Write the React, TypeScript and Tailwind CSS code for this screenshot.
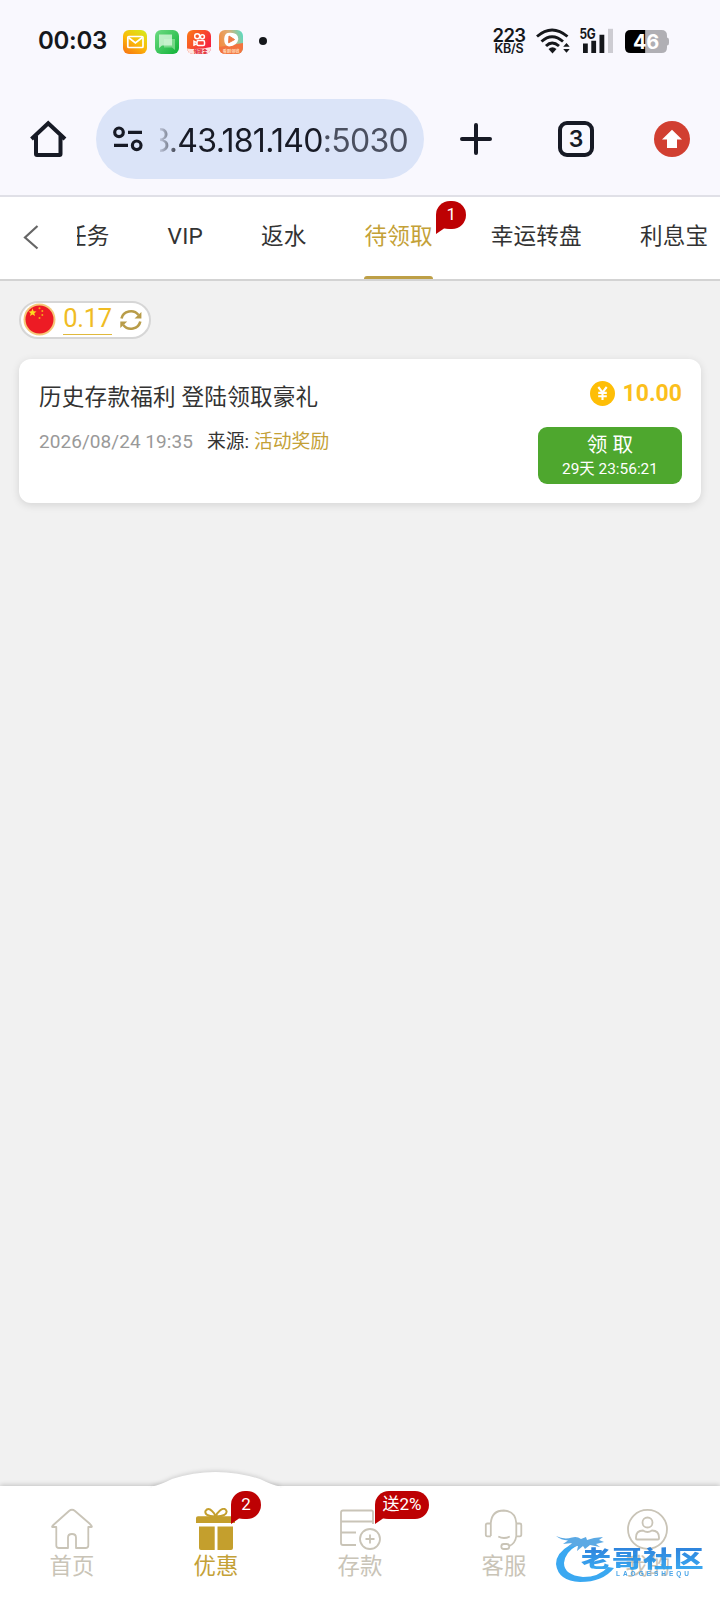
import type { ReactNode } from 'react';

const tabs = ['任务', 'VIP', '返水', '待领取', '幸运转盘', '利息宝'];

function Bubble({ children, className }: { children: ReactNode; className: string }) {
  return (
    <span className={`absolute flex h-[28px] items-center justify-center rounded-[14px] bg-[#bd0103] text-white ${className}`}>
      <svg className="absolute top-[14px] left-0" width="14" height="20" viewBox="0 0 14 20">
        <path d="M0 0V19L8 13.5H14V0Z" fill="#bd0103" />
      </svg>
      <span className="relative -mt-[2px] leading-none">{children}</span>
    </span>
  );
}

function StatusBar() {
  return (
    <div className="flex h-[82px] items-center pl-[38px] text-[#15171b]">
      <span className="w-[85px] font-['Inter'] text-[24px] leading-none font-semibold tracking-[-0.3px]">00:03</span>
      <div className="flex gap-2 pt-[2px]">
        <svg width="24" height="24" viewBox="0 0 24 24">
          <defs>
            <linearGradient id="mail" x1="0.8" y1="0" x2="0.2" y2="1">
              <stop offset="0" stopColor="#d9e619" />
              <stop offset="0.5" stopColor="#fbbc09" />
              <stop offset="1" stopColor="#f87a12" />
            </linearGradient>
          </defs>
          <rect width="24" height="24" rx="6" fill="url(#mail)" />
          <rect x="4.8" y="6.5" width="15.2" height="11" rx="1" fill="none" stroke="#fff" strokeWidth="1.7" />
          <path d="M5.5 7.5L12.4 13L19.3 7.5" fill="none" stroke="#fff" strokeWidth="1.7" />
        </svg>
        <svg width="24" height="24" viewBox="0 0 24 24">
          <defs>
            <linearGradient id="chat" x1="0" y1="0" x2="1" y2="1">
              <stop offset="0" stopColor="#6edb82" />
              <stop offset="1" stopColor="#10b238" />
            </linearGradient>
          </defs>
          <rect width="24" height="24" rx="6" fill="url(#chat)" />
          <path d="M9 9H20V20L17 17.5H9Z" fill="#a5e8ad" opacity="0.6" />
          <path d="M4 4.5H17V15.5H7L4 18Z" fill="#d8f8dc" opacity="0.8" />
        </svg>
        <svg width="24" height="24" viewBox="0 0 24 24">
          <defs>
            <linearGradient id="cam" x1="0" y1="0" x2="1" y2="0.7">
              <stop offset="0" stopColor="#fb7d16" />
              <stop offset="1" stopColor="#f51d43" />
            </linearGradient>
            <clipPath id="round"><rect width="24" height="24" rx="6" /></clipPath>
          </defs>
          <g clipPath="url(#round)">
            <rect width="24" height="24" fill="url(#cam)" />
            <g fill="none" stroke="#fff" strokeWidth="1.5">
              <circle cx="10.2" cy="6.2" r="2.5" />
              <circle cx="15.4" cy="6.8" r="2" />
              <rect x="10" y="10.6" width="7.5" height="5" rx="1.3" />
              <path d="M9.8 12.6L7 11.3V15L9.8 13.8" />
            </g>
            <path d="M0 18.5Q12 20 24 17V24H0Z" fill="#ffe5df" />
            <g transform="translate(6.5 23) scale(0.42)">
              <text fontSize="11" fontWeight="900" fill="#df2633" fontFamily="Noto Sans CJK SC, sans-serif">领现金</text>
            </g>
          </g>
        </svg>
        <svg width="24" height="24" viewBox="0 0 24 24">
          <defs>
            <linearGradient id="play" x1="0" y1="0.6" x2="1" y2="0.3">
              <stop offset="0" stopColor="#f58a3e" />
              <stop offset="0.5" stopColor="#e0ae74" />
              <stop offset="1" stopColor="#62d8bd" />
            </linearGradient>
          </defs>
          <g clipPath="url(#round)">
            <rect width="24" height="24" fill="url(#play)" />
            <path d="M0 17L24 13V24H0Z" fill="#f3743f" />
            <path d="M8.5 3Q19 1.5 19.3 9Q18.5 15.5 10 16.5Q5 15.5 5.2 9Q5.5 4 8.5 3Z" fill="#fff" />
            <path d="M10 6L15.6 9.6L9.6 12.8Z" fill="#ee7a45" stroke="#ee7a45" strokeWidth="1" strokeLinejoin="round" />
            <g transform="translate(3.8 22.6) scale(0.38)">
              <text fontSize="11" fontWeight="700" fill="#ffd9b5" fontFamily="Noto Sans CJK SC, sans-serif">看剧领钱</text>
            </g>
          </g>
        </svg>
      </div>
      <span className="ml-4 h-2 w-2 rounded-full bg-[#15171b]" />
      <div className="ml-[225px] flex h-[28px] w-[34px] flex-col items-center font-['Inter'] leading-none font-semibold">
        <span className="text-[18.5px] leading-[16px] tracking-[-0.6px]">223</span>
        <span className="text-[12.5px] leading-[12px] tracking-[-0.2px]">KB/S</span>
      </div>
      <svg className="ml-[10px]" width="34" height="26" viewBox="0 0 34 26">
        <g fill="none" stroke="#15171b" strokeWidth="2.9">
          <path d="M1 8.5Q16 -4.5 31.5 8.5" />
          <path d="M5.5 13.5Q16 4 27 13.5" />
          <path d="M10 18Q16 12 23 18" />
        </g>
        <path d="M12.5 21Q16.5 17.5 20.5 21L16.5 25.5Z" fill="#15171b" />
        <path d="M27.2 18.8L30.5 15L33.7 18.8ZM27.2 21L30.5 24.7L33.7 21Z" fill="#15171b" />
      </svg>
      <svg className="ml-[9px]" width="36" height="28" viewBox="0 -1 36 28">
        <g transform="translate(0.5 10.5) scale(0.82 1)">
          <text fontSize="14.5" fontWeight="700" fill="#15171b" fontFamily="Inter, sans-serif" letterSpacing="-0.4">5G</text>
        </g>
        <path d="M4 15.5H8.8V25H4ZM12.3 12.8H17.1V25H12.3ZM20.5 6.8H25.3V25H20.5Z" fill="#15171b" />
        <path d="M29 0.8H34V25H29Z" fill="#cdccd2" />
      </svg>
      <svg className="ml-[9px]" width="46" height="25" viewBox="0 0 46 25">
        <path d="M6.5 1H21.5V24H6.5Q1 24 1 18.5V6.5Q1 1 6.5 1Z" fill="#000" />
        <path d="M21.5 1H37.5Q43 1 43 6.5V8.5Q45 8.5 45 11V14Q45 16.5 43 16.5V18.5Q43 24 37.5 24H21.5Z" fill="#b0afb4" />
        <text x="9" y="19.5" fontSize="20" fontWeight="700" letterSpacing="-0.4" fill="#fff" fontFamily="Inter, sans-serif">46</text>
      </svg>
    </div>
  );
}

function BrowserBar() {
  return (
    <div className="flex h-[115px] items-start border-b-2 border-[#e0e0e7] pt-[17px] pl-[30px]">
      <svg className="mt-[21px]" width="37" height="38" viewBox="0 0 37 38">
        <path d="M1.5 19L18.2 3.2L35 19M6 16V34Q6 35 7 35H29.5Q30.5 35 30.5 34V16" fill="none" stroke="#171a25" strokeWidth="4" />
      </svg>
      <div className="ml-[29px] flex h-[80px] w-[328px] items-center rounded-full bg-[#dbe4f8] pl-[16px]">
        <svg width="32" height="26" viewBox="0 0 32 26">
          <g fill="none" stroke="#171a25" strokeWidth="3.2">
            <circle cx="7" cy="6.3" r="4.3" />
            <path d="M16 6.3H30M2 19.3H16" />
            <circle cx="24.7" cy="19.3" r="4.3" />
          </g>
        </svg>
        <div className="ml-[16px] flex h-10 w-[248px] translate-y-[2px] items-center justify-end overflow-hidden [mask-image:linear-gradient(to_right,rgba(0,0,0,0.15),black_22px)]">
          <span className="shrink-0 font-['Inter'] text-[32px] leading-10 font-[370] tracking-[-0.7px] text-[#171a25]">
            3.43.181.140<span className="text-[#4b5060]">:5030</span>
          </span>
        </div>
      </div>
      <svg className="mt-[23px] ml-[35px]" width="34" height="34" viewBox="0 0 34 34">
        <path d="M17 3V31M3 17H31" stroke="#171a25" strokeWidth="4" strokeLinecap="round" />
      </svg>
      <span className="mt-[22px] ml-[65px] flex h-9 w-9 items-center justify-center rounded-[9px] border-4 border-[#171a25] font-['Inter'] text-[23px] leading-none font-semibold text-[#171a25]">3</span>
      <svg className="mt-[22px] ml-[60px]" width="36" height="36" viewBox="0 0 36 36">
        <circle cx="18" cy="18" r="18" fill="#d13f31" />
        <path d="M18 8.7L28 18.5H23V27H13V18.5H8Z" fill="#fff" />
      </svg>
    </div>
  );
}

function TabBar() {
  return (
    <div className="flex h-[84px] border-b-2 border-[#d3d3d3] bg-white">
      <svg className="mt-[27px] ml-[22px] shrink-0" width="18" height="26" viewBox="0 0 18 26">
        <path d="M15.5 2L3 13.5L15.5 24.5" fill="none" stroke="#666" strokeWidth="2.2" />
      </svg>
      <div className="ml-[37px] flex w-[643px] overflow-hidden">
        <div className="-ml-[13px] flex shrink-0 gap-[58px]">
          {tabs.map((t) => {
            const active = t === '待领取';
            return (
              <div key={t} className={`relative h-[82px] shrink-0 pt-[26px] text-[22.6px] leading-[28px] tracking-[0.18px] whitespace-nowrap ${active ? 'text-[#c4a137]' : 'text-[#333]'}`}>
                {t}
                {active && <span className="absolute bottom-0 left-0 h-[3px] w-full rounded-t-sm bg-[#bd9f46]" />}
                {active && <Bubble className="top-[4px] left-[72px] w-[30px] text-[17px]">1</Bubble>}
              </div>
            );
          })}
        </div>
      </div>
    </div>
  );
}

function Balance() {
  return (
    <div className="flex h-[38px] w-[132px] items-center rounded-full border-2 border-[#d6d6d6] bg-white pl-[2px]">
      <svg className="-mt-[2px]" width="33" height="33" viewBox="0 0 33 33">
        <circle cx="16.5" cy="16.5" r="16" fill="#f6c878" />
        <circle cx="16.5" cy="16.5" r="14" fill="#ed1b24" />
        <path d="M9.5 5.5L10.6 8.2L13.5 8.4L11.3 10.2L12 13L9.5 11.5L7 13L7.7 10.2L5.5 8.4L8.4 8.2Z" fill="#fbdc20" />
        <g fill="#f5a81c">
          <circle cx="16.5" cy="5.2" r="1" /><circle cx="19.3" cy="8" r="1" /><circle cx="19.3" cy="12" r="1" /><circle cx="16.5" cy="15" r="1" />
        </g>
      </svg>
      <span className="-mt-px ml-[7px] h-[31px] w-[49px] border-b border-[#e0b93c] text-center font-['Roboto'] text-[25.5px] leading-[29px] tracking-[-0.3px] text-[#f0bc23]">0.17</span>
      <svg className="-mt-px ml-[7px]" width="24" height="24" viewBox="0 0 24 24">
        <g fill="none" stroke="#b89c48" strokeWidth="2.6">
          <path d="M2.5 10.5A9.5 9 0 0 1 19.5 7" />
          <path d="M21.3 13.5A9.5 9 0 0 1 4.3 17" />
        </g>
        <path d="M22.4 4V10.5H15.5ZM1.3 20V13.5H8.2Z" fill="#b89c48" />
      </svg>
    </div>
  );
}

function RewardCard() {
  return (
    <div className="mt-[20px] flex h-[144px] justify-between rounded-[12px] bg-white pr-[19px] pl-[20px] shadow-[0_2px_8px_rgba(0,0,0,0.12)]">
      <div className="pt-[23px]">
        <h1 className="text-[22.6px] leading-8 tracking-[0.2px] text-[#333]">历史存款福利 登陆领取豪礼</h1>
        <p className="mt-[15px] flex text-[18.8px] leading-[26px] text-[#333]">
          <span className="mr-[14px] font-['Roboto'] text-[19px] tracking-[0.05px] text-[#999]">2026/08/24 19:35</span>
          来源:<span className="ml-[5px] text-[#c4a137]">活动奖励</span>
        </p>
      </div>
      <div className="flex w-[144px] flex-col items-end pt-[21px]">
        <div className="flex h-[26px] items-center font-['Roboto'] text-[23px] leading-none font-bold text-[#fbbf1c]">
          <svg className="mr-[8px]" width="25" height="25" viewBox="0 0 25 25">
            <circle cx="12.5" cy="12.5" r="12.5" fill="#febe06" />
            <path d="M8.3 6L12.5 11.3L16.7 6M12.5 11V19M8.2 11.9H16.8M8.2 15.2H16.8" fill="none" stroke="#fff" strokeWidth="2.1" />
          </svg>
          10.00
        </div>
        <button className="mt-[21px] flex h-[57px] w-[144px] flex-col items-center rounded-[9px] bg-[#4ea72e] pt-[5px] text-white">
          <span className="text-[20.6px] leading-[26px]">领 取</span>
          <span className="font-['Roboto','Noto_Sans_CJK_SC',sans-serif] text-[15.4px] leading-[22px]">29天 23:56:21</span>
        </button>
      </div>
    </div>
  );
}

const stroke = { fill: 'none', stroke: '#c9c4b7', strokeWidth: 1.8 };

function NavItem({ icon, label, active = false, badge }: { icon: ReactNode; label: string; active?: boolean; badge?: ReactNode }) {
  return (
    <div className={`relative flex w-[144px] flex-col items-center pt-[22px] text-[22.4px] leading-[28px] ${active ? 'text-[#c4a137]' : 'text-[#c9c4b7]'}`}>
      <svg width="44" height="44" viewBox="0 0 44 44">{icon}</svg>
      <span>{label}</span>
      {badge}
    </div>
  );
}

function BottomNav() {
  return (
    <nav className="relative h-[118px] bg-white shadow-[0_-1px_5px_rgba(0,0,0,0.2)]">
      <svg className="absolute -top-[20px] left-[140px]" width="154" height="22" viewBox="0 0 154 22">
        <path d="M12 20.5Q20 19 32 13Q75 -1 120 13Q132 19 140 20.5V22H12Z" fill="#fff" className="[filter:drop-shadow(0_-1px_2px_rgba(0,0,0,0.15))]" />
        <path d="M14 20.5H138V22H14Z" fill="#fff" />
      </svg>
      <div className="relative flex">
        <NavItem label="首页" icon={
          <path {...stroke} strokeLinejoin="round" d="M5 15.5Q1 19 2.5 19H6.3V37.5Q6.3 40 9 40H18V29.5Q18 26 22 26Q26 26 26 29.5V40H35.5Q38.3 40 38.3 37.5V19H41.3Q43 19 39.5 15.5L25 3Q22 .6 19 3Z" />
        } />
        <NavItem label="优惠" active badge={<Bubble className="top-[5px] left-[87px] w-[30px] text-[17px]">2</Bubble>} icon={
          <g>
            <path d="M4 8.3H39Q41 8.3 41 10V15H2V10Q2 8.3 4 8.3ZM5 18.5H20.7V42H7Q5 42 5 40ZM23.5 18.5H39V40Q39 42 37 42H23.5Z" fill="#c49f2d" />
            <path d="M21 8.5Q10 8 11.5 3Q14 -1 18 3Q20.5 5 21.5 8.5Q23 5 26 2.5Q31 -1 32.5 3Q33.5 8 22 8.5" fill="none" stroke="#c49f2d" strokeWidth="2" />
          </g>
        } />
        <NavItem label="存款" badge={<Bubble className="top-[5px] left-[87px] w-[54px] text-[17px]">送2%</Bubble>} icon={
          <g {...stroke}>
            <path d="M35 16V4Q35 2.5 33.5 2.5H5Q3 2.5 3 4.5V35Q3 37 5 37H18M3 13.5H35M3 24.5H18" />
            <circle cx="32" cy="31" r="10" /><path d="M32 26.5V35.5M27.5 31H36.5" />
          </g>
        } />
        <NavItem label="客服" icon={
          <g {...stroke} transform="translate(-0.7 0)">
            <path d="M9.5 28V15Q10.5 2.5 22.5 2.5Q34 3 35 15V28M9.5 15.5H6Q4.5 15.5 4.5 17V26.5Q4.5 28.3 6 28.3H9.5M35 15.5H38.5Q40 15.5 40 17V26.5Q40 28.3 38.5 28.3H35M35 28Q34 35.5 28 38M17 28.5Q22.5 31.5 28.5 28.5" />
            <rect x="20" y="36" width="8" height="5" rx="2.5" />
          </g>
        } />
        <NavItem label="我的" icon={
          <g {...stroke}>
            <circle cx="21.5" cy="21.3" r="19.5" /><circle cx="21.5" cy="14.5" r="5" />
            <path d="M10 29.5Q10 22.5 17 22.5Q21.5 25.5 26 22.5Q33 22.5 33 29.5V30.5Q33 31.5 32 31.5H11Q10 31.5 10 30.5Z" />
          </g>
        } />
      </div>
      <svg className="absolute top-[46px] left-[550px]" width="160" height="56" viewBox="0 0 160 56" opacity="0.9">
        <defs>
          <linearGradient id="blue" x1="0" y1="0" x2="0" y2="1">
            <stop offset="0" stopColor="#1469d2" />
            <stop offset="1" stopColor="#28a8f4" />
          </linearGradient>
        </defs>
        <path d="M20 13Q6 21 6 32Q8 49 30 50Q53 50 64 36L58 35Q49 45 33 45Q14 43 14 31Q15 20 28 13Z" fill="#259ff0" />
        <path d="M6 4Q14 8 22 5.5Q27 4 31 7L36 5L37 8L44 6L53 5L49 8L54 10L46 12L50 15L40 13L35 17L33 14L27 19L28 14L18 15L22 11L13 12L18 8.5Q11 8 6 4Z" fill="#4aa0e2" />
        <g fill="url(#blue)" fontFamily="Noto Sans CJK SC, sans-serif" fontWeight="900">
          <text transform="translate(31 35) scale(1.34 1)" fontSize="22.3" letterSpacing="0.8">老哥社区</text>
        </g>
        <text x="66" y="43.5" fontSize="6.5" fontWeight="700" fill="#379ce7" fontFamily="Liberation Sans, sans-serif" textLength="73">LAOGESHEQU</text>
      </svg>
    </nav>
  );
}

export default function App() {
  return (
    <div className="flex h-[1604px] w-[720px] flex-col overflow-hidden bg-[#f1f1f1] font-['Roboto','Noto_Sans_CJK_SC',sans-serif]">
      <header className="bg-[#f9f8fe]">
        <StatusBar />
        <BrowserBar />
      </header>
      <TabBar />
      <main className="flex-1 px-[19px] pt-[20px]">
        <Balance />
        <RewardCard />
      </main>
      <BottomNav />
    </div>
  );
}
